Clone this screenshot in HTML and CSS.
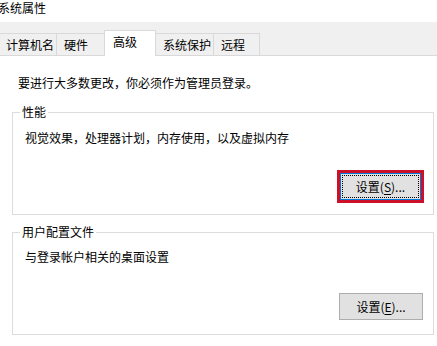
FILE: index.html
```html
<!DOCTYPE html>
<html lang="zh-CN">
<head>
<meta charset="utf-8">
<title>系统属性</title>
<link rel="stylesheet" href="styles.css">
</head>
<body>
<div class="title">系统属性</div>
<div class="tabbar">
  <div class="tab t1">计算机名</div>
  <div class="tab t2">硬件</div>
  <div class="tab t3 active">高级</div>
  <div class="tab t4">系统保护</div>
  <div class="tab t5">远程</div>
</div>
<div class="panel">
  <p class="note">要进行大多数更改，你必须作为管理员登录。</p>
  <div class="group perf">
    <div class="legend">性能</div>
    <div class="desc">视觉效果，处理器计划，内存使用，以及虚拟内存</div>
    <div class="actions">
      <div class="highlight">
        <button class="btn focused"><span class="focus">设置(<u>S</u>)...</span></button>
      </div>
    </div>
  </div>
  <div class="group profile">
    <div class="legend">用户配置文件</div>
    <div class="desc">与登录帐户相关的桌面设置</div>
    <div class="actions">
      <button class="btn plain">设置(<u>E</u>)...</button>
    </div>
  </div>
</div>
</body>
</html>
```
FILE: styles.css
```css
* { box-sizing: border-box; }
html, body { margin: 0; padding: 0; }
body {
  width: 437px;
  height: 346px;
  overflow: hidden;
  background: #ffffff;
  color: #000;
  font-family: "Noto Sans CJK SC", "Microsoft YaHei", sans-serif;
  font-size: 12px;
  line-height: 16px;
}
.title {
  height: 22px;
  padding-top: 0;
  margin-left: -2px;
  line-height: 15px;
  background: #fff;
}
.tabbar {
  display: flex;
  align-items: flex-end;
  height: 34px;
  margin-left: -2px;
  background: #f0f0f0;
  border-bottom: 1px solid #d9d9d9;
}
.tab {
  height: 22px;
  padding: 2px 0 0 7px;
  line-height: 18px;
  border-top: 1px solid #d9d9d9;
  border-left: 1px solid #d9d9d9;
  background: #f0f0f0;
  white-space: nowrap;
}
.t1 { width: 58px; }
.t2 { width: 48px; }
.t3 { width: 52px; }
.t4 { width: 58px; }
.t5 { width: 47px; border-right: 1px solid #d9d9d9; }
.tab.active {
  position: relative;
  z-index: 1;
  height: 26px;
  margin-bottom: -1px;
  margin-right: -1px;
  padding: 2px 0 0 8px;
  background: #fff;
  border-right: 1px solid #d9d9d9;
}
.panel {
  padding-top: 19px;
}
.note {
  margin: 0 0 0 18px;
  line-height: 16px;
}
.group {
  margin: 21px 3px 0 12px;
  border: 1px solid #dcdcdc;
}
.legend {
  display: block;
  width: fit-content;
  height: 16px;
  margin: -9px 0 0 7px;
  padding: 0 2px;
  background: #fff;
  line-height: 16px;
}
.desc {
  margin: 10px 0 0 12px;
  line-height: 16px;
}
.actions {
  display: flex;
  justify-content: flex-end;
}
.perf .actions {
  margin: 24px 9px 0 0;
  padding-bottom: 11px;
}
.profile { margin-top: 17px; }
.profile .desc { margin-top: 9px; }
.profile .actions {
  margin: 28px 10px 0 0;
  padding-bottom: 14px;
}
.highlight {
  width: 87px;
  height: 33px;
  border: 3px solid #cc1029;
}
.btn {
  margin: 0;
  font-family: inherit;
  font-size: 12px;
  line-height: 16px;
  color: #000;
  background: #e1e1e1;
  border: 1px solid #adadad;
  padding: 0;
  cursor: default;
}
.btn u { text-decoration: underline; text-underline-offset: 2px; }
.btn.plain {
  display: block;
  width: 84px;
  height: 27px;
}
.btn.focused {
  display: block;
  width: 81px;
  height: 27px;
  border: 1px solid #0078d7;
  padding: 1px;
}
.focus {
  display: flex;
  align-items: center;
  justify-content: center;
  width: 100%;
  height: 100%;
  border: 1px dotted #000;
}
```
